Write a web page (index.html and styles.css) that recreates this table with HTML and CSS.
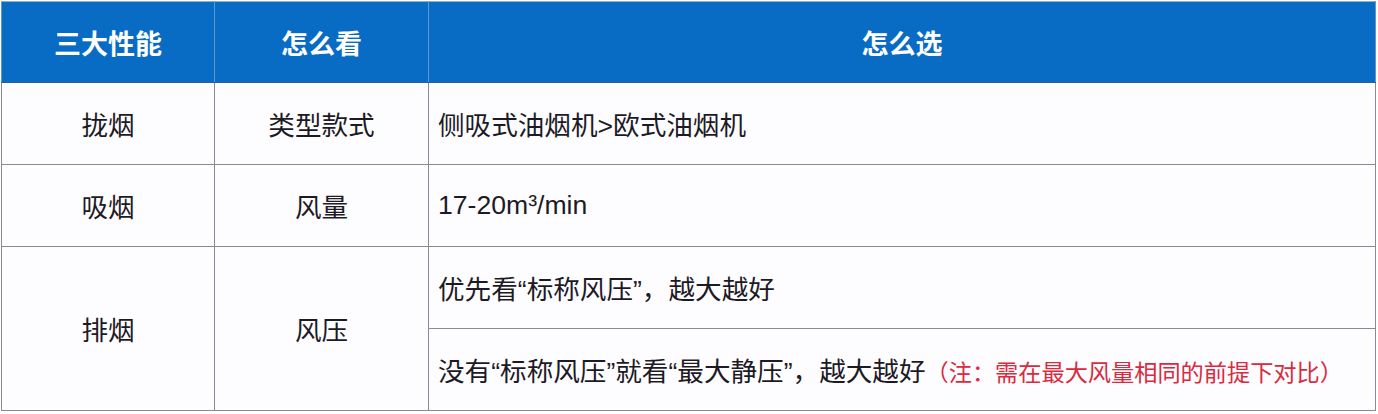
FILE: index.html
```html
<!DOCTYPE html>
<html lang="zh-CN">
<head>
<meta charset="utf-8">
<title>油烟机三大性能</title>
<link rel="stylesheet" href="styles.css">
</head>
<body>
<table class="spec">
  <colgroup>
    <col class="c1">
    <col class="c2">
    <col class="c3">
  </colgroup>
  <thead>
    <tr class="head">
      <th>三大性能</th>
      <th>怎么看</th>
      <th>怎么选</th>
    </tr>
  </thead>
  <tbody>
    <tr>
      <td class="mid">拢烟</td>
      <td class="mid">类型款式</td>
      <td class="txt">侧吸式油烟机&gt;欧式油烟机</td>
    </tr>
    <tr>
      <td class="mid">吸烟</td>
      <td class="mid">风量</td>
      <td class="txt">17-20m³/min</td>
    </tr>
    <tr>
      <td class="mid" rowspan="2">排烟</td>
      <td class="mid" rowspan="2">风压</td>
      <td class="txt">优先看“标称风压”，越大越好</td>
    </tr>
    <tr>
      <td class="txt">没有“标称风压”就看“最大静压”，越大越好<span class="note">（注：需在最大风量相同的前提下对比）</span></td>
    </tr>
  </tbody>
</table>
</body>
</html>
```

FILE: styles.css
```css
html, body {
  margin: 0;
  padding: 0;
  background: #ffffff;
}

body {
  font-family: "Liberation Sans", "Noto Sans CJK SC", sans-serif;
  color: #1d1a26;
}

.spec {
  border-collapse: collapse;
  table-layout: fixed;
  width: 1374px;
  margin: 1px 0 0 1px;
  font-size: 26.6px;
  background: #fdfdff;
}

.c1 { width: 213px; }
.c2 { width: 214px; }
.c3 { width: 947px; }

.head th {
  height: 80px;
  padding: 0;
  background: #086bc4;
  color: #ffffff;
  font-weight: bold;
  font-size: 27px;
  text-align: center;
  border: 1px solid #5f98cf;
  border-bottom: 1px solid #2a5f9a;
  border-top: 1px solid #8fb0cf;
}

.spec td {
  height: 81px;
  padding: 0;
  border: 1px solid #8c8799;
  vertical-align: middle;
}

.mid {
  text-align: center;
}

.txt {
  text-align: left;
  padding-left: 9px !important;
}

.note {
  color: #d92a3e;
  font-size: 23.2px;
}
```
